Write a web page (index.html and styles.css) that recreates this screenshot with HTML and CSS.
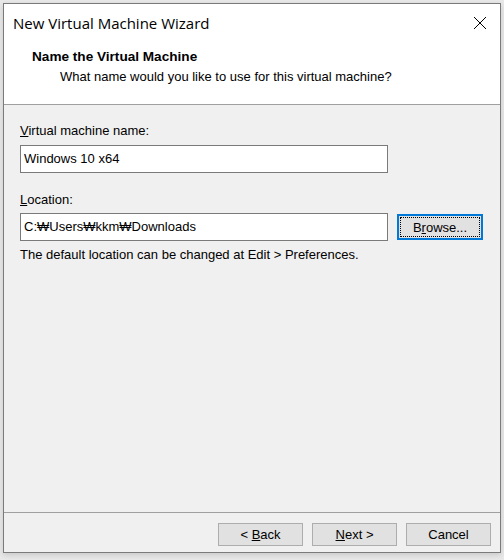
FILE: index.html
```html
<!DOCTYPE html>
<html>
<head>
<meta charset="utf-8">
<link rel="stylesheet" href="styles.css">
</head>
<body>
<div class="window">
  <div class="header">
    <div class="titlebar">
      <span class="title">New Virtual Machine Wizard</span>
      <svg class="close" width="14" height="14" viewBox="0 0 14 14"><path d="M1 1 L13 13 M13 1 L1 13" stroke="#000" stroke-width="1" fill="none"/></svg>
    </div>
    <div class="page-head">
      <div class="h-title">Name the Virtual Machine</div>
      <div class="h-sub">What name would you like to use for this virtual machine?</div>
    </div>
  </div>
  <div class="content">
    <div class="lbl"><u>V</u>irtual machine name:</div>
    <div class="field">Windows 10 x64</div>
    <div class="lbl lbl-loc"><u>L</u>ocation:</div>
    <div class="row">
      <div class="field">C:₩Users₩kkm₩Downloads</div>
      <div class="btn btn-focus"><span class="focus-ring">B<u>r</u>owse...</span></div>
    </div>
    <div class="hint">The default location can be changed at Edit &gt; Preferences.</div>
  </div>
  <div class="footer">
    <div class="btn">&lt; <u>B</u>ack</div>
    <div class="btn"><u>N</u>ext &gt;</div>
    <div class="btn">Cancel</div>
  </div>
</div>
</body>
</html>
```
FILE: styles.css
```css
html, body {
  margin: 0;
  padding: 0;
}
body {
  background: #e9e9e9;
  width: 504px;
  height: 560px;
  overflow: hidden;
  font-family: "Liberation Sans", Arial, sans-serif;
  font-size: 13px;
  color: #000;
}
.window {
  margin: 3px 0 0 3px;
  width: 498px;
  height: 550px;
  box-sizing: border-box;
  border: 1px solid #7a7a7a;
  background: #f0f0f0;
  display: flex;
  flex-direction: column;
  box-shadow: 0 2px 6px rgba(0,0,0,0.15);
}
.header {
  background: #fff;
  height: 100px;
  border-bottom: 1px solid #a0a0a0;
  flex: none;
}
.titlebar {
  height: 36px;
  display: flex;
  align-items: center;
  justify-content: space-between;
  padding: 0 13px 0 9px;
}
.title {
  font-family: "Open Sans", "Noto Sans", sans-serif;
  font-size: 15px;
  color: #000;
  margin-top: 1px;
}
.close {
  margin-top: 2px;
}
.page-head {
  padding: 9px 0 0 28px;
}
.h-title {
  font-weight: bold;
  font-size: 13.6px;
  line-height: 16px;
}
.h-sub {
  padding-left: 28px;
  margin-top: 4px;
  line-height: 16px;
}
.content {
  flex: 1;
  padding: 18px 0 0 16px;
}
.lbl {
  line-height: 16px;
}
.lbl-loc {
  margin-top: 19px;
}
.field {
  margin-top: 6px;
  width: 368px;
  height: 28px;
  box-sizing: border-box;
  border: 1px solid #7a7a7a;
  background: #fff;
  padding: 0 0 0 3px;
  line-height: 25px;
}
.row {
  display: flex;
  align-items: flex-start;
  gap: 9px;
}
.row .field {
  margin-top: 0;
}
.lbl-loc + .row {
  margin-top: 5px;
}
.btn {
  width: 85px;
  height: 23px;
  box-sizing: border-box;
  border: 1px solid #adadad;
  background: #e1e1e1;
  text-align: center;
  line-height: 21px;
}
.btn-focus {
  margin-top: 1px;
  width: 86px;
  height: 26px;
  border: 2px solid #0078d7;
  padding: 1px;
  line-height: 19px;
}
.focus-ring {
  display: block;
  height: 20px;
  box-sizing: border-box;
  border: 1px dotted #000;
}
.hint {
  margin-top: 6px;
  line-height: 16px;
}
.footer {
  flex: none;
  height: 40px;
  border-top: 1px solid #a0a0a0;
  display: flex;
  justify-content: flex-end;
  gap: 9px;
  padding: 10px 9px 0 0;
  box-sizing: border-box;
}
```
